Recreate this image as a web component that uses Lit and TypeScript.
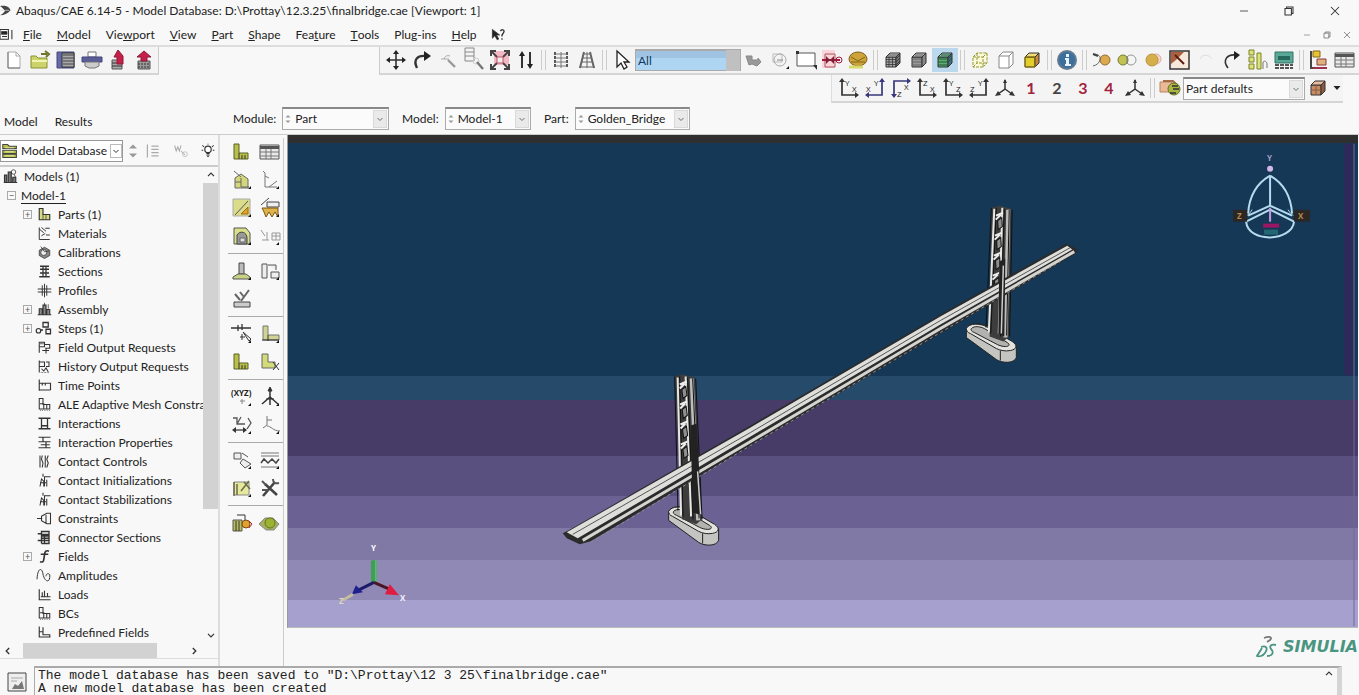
import { LitElement, html, svg, css, nothing, type SVGTemplateResult } from "lit";
import { customElement, property } from "lit/decorators.js";
import { classMap } from "lit/directives/class-map.js";

const cube = (front: string, top: string, side: string) => svg`
  <path d="M3 7h10v10H3z" fill=${front}/><path d="M3 7l4-4h10l-4 4z" fill=${top}/><path d="M13 7l4-4v10l-4 4z" fill=${side}/>`;
const meshLines = svg`<path d="M3 9.5h10M3 12h10M3 14.5h10M6 7v10M9.500 7v10M5 5h10M13 9l4-4M13 12l4-4M13 15l4-4" opacity=".8"/>`;
const bracket = svg`<path d="M2 2h5v9h9v6H2z" fill="#b9c04a" stroke="#5c6024"/><path d="M7 11v6M10 13v4M13 13v4"/>`;
const corner = svg`<path d="M19 16v3h-3z" fill="#111" stroke="none"/>`;

const ICONS: Record<string, SVGTemplateResult> = {
  app: svg`<path d="M0 3c9-2 14 2 15 6-4 5-9 7-15 7 4-2 6-4 7-6-2-3-4-5-7-7z" fill="#444" stroke="none"/><path d="M0 9h13" stroke="#ddd"/>`,
  doc: svg`<path d="M0 2h12v14H0z" stroke-width="1.500"/><path d="M2 5h8v4H2z" fill="#222"/><path d="M3 12h7M17 3v13" stroke-width="1.500"/>`,
  new: svg`<path d="M4 2h8l4 4v12H4z" fill="#fff" stroke="#aaa"/><path d="M4 2v16h12" stroke="#777"/><path d="M12 2v4h4" stroke="#aaa"/>`,
  open: svg`<path d="M1 6h5l2 2h9v10H1z" fill="#cbd36a" stroke="#8a9130"/><path d="M2 11h15" stroke="#f2f5b0" stroke-width="2"/><path d="M11 4h6M15 1l4 3-3 3" stroke="#6d7428" stroke-width="2"/>`,
  save: svg`<path d="M1 2h17v16H1z" fill="#6669a8" stroke="#44467a"/><path d="M6 3h12v14H6z" fill="#aaa"/><path d="M7 5h11M7 8h11M7 11h11M7 14h11" stroke="#444"/>`,
  print: svg`<path d="M6 2h8v5H6z" fill="#fff" stroke="#777"/><path d="M0 7h20v5H0z" fill="#5b5d99" stroke="#45477c"/><path d="M3 12h14v4l-4 2H7l-4-2z" fill="#ccc" stroke="#777"/>`,
  exportA: svg`<path d="M4 10h10v9H4z" fill="#aaa" stroke="#555"/><path d="M4 13h10M4 16h10"/><path d="M9 14V7H6l4-7 5 6v8z" fill="#c42048" stroke="#90183a"/>`,
  exportB: svg`<path d="M4 11h12v8H4z" fill="#999" stroke="#555"/><path d="M4 14h12M4 17h12" stroke-dasharray="2 1"/><path d="M7 11V7H3l7-6 7 6h-4v4z" fill="#c42048" stroke="#90183a"/>`,
  pan: svg`<path d="M10 2v16M2 10h16" stroke-width="1.600"/><path d="M10 0l3 4H7zM10 20l3-4H7zM0 10l4-3v6zM20 10l-4-3v6z" fill="#222" stroke="none"/>`,
  rotate: svg`<path d="M5 18C1 10 5 5 14 6" stroke-width="2.400"/><path d="M12 1l7 5-7 5z" fill="#222" stroke="none"/>`,
  mag: svg`<path d="M12 6c-3-1-5 0-6 3M3 9h8" stroke="#aaa"/><path d="M10 10l7 7" stroke="#999" stroke-width="2.400"/>`,
  magBox: svg`<path d="M1 -2h9v13H1zM1 2h9M1 6h9" stroke="#888"/><circle cx="12" cy="11" r="3" stroke="#ccc"/><path d="M13 12l6 7" stroke="#777" stroke-width="2.400"/>`,
  fit: svg`<path d="M4 1h15v14H4z" fill="#f4b8c4" stroke="none"/><path d="M1 1l6 6M19 1l-6 6M1 19l6-6M19 19l-6-6" stroke="#444" stroke-width="1.800"/><path d="M1 6V1h5M14 1h5v5M1 14v5h5M14 19h5v-5" stroke="#444" stroke-width="2"/><path d="M7 7h6v6H7z" fill="#eee" stroke="#b56"/>`,
  updown: svg`<path d="M6 18V4M14 2v14" stroke-width="2"/><path d="M6 1l3 5H3zM14 19l3-5h-6z" fill="#222" stroke="none"/>`,
  grid: svg`<path d="M4 2v16M16 2v16" stroke-width="2" stroke-dasharray="3 1" stroke="#555"/><path d="M4 4h12M4 8h12M4 12h12M4 16h12M10 2v16" stroke="#777"/>`,
  persp: svg`<path d="M7 2L3 18M13 2l4 16" stroke="#666" stroke-width="2"/><path d="M6 4h8M5 8h10M4 12h12M2 17h16M10 2v16" stroke="#666"/>`,
  pointer: svg`<path d="M5 1v16l4-4 3 6 3-2-3-5h5z" fill="#fff" stroke="#222" stroke-width="1.300"/>`,
  blob: svg`<path d="M2 6h6v4h6V8l3 4-4 4-5-2-3 1z" fill="#999" stroke="#888"/>`,
  blob2: svg`<path d="M3 4h9v8H3z" stroke="#bbb"/><circle cx="10" cy="10" r="6" stroke="#aaa"/><path d="M7 10h6" stroke="#888"/>${corner}`,
  rectSel: svg`<path d="M1 3h18v13H1z" fill="#fff" stroke="#555"/><path d="M0 1h3v3H0zM17 15h4v5z" fill="#333" stroke="none"/>`,
  redSel: svg`<path d="M0 0h13v18H0z" fill="#fbd5dc" stroke="none"/><path d="M3 4h10v13H3z" stroke="#a55"/><path d="M0 10h18" stroke="#a01c3c" stroke-width="2"/><path d="M4 6l4 4-4 4zM12 6v8l-4-4z" fill="#802038" stroke="none"/><circle cx="17" cy="10" r="3" stroke="#a01c3c"/>`,
  ball: svg`<ellipse cx="10" cy="9" rx="9" ry="7" fill="#d0a23a" stroke="#7c611e"/><path d="M3 7l7 4 7-4M3 12h14" stroke="#7a6a18"/><path d="M1 17h14" stroke="#d8db6c" stroke-width="3"/>`,
  cubeMesh: svg`${cube("#aaa", "#ccc", "#777")}${meshLines}`,
  cubeDark: svg`${cube("#999", "#bbb", "#888")}<path d="M4 9h8M4 12h8M4 15h8M6 5h8" stroke="#666"/>`,
  cubeGreen: svg`${cube("#59b06f", "#8fc7ae", "#446e86")}<path d="M3 9h10M3 12h10M3 15h10M6 5h9M13 9l4-4M13 12l4-4" stroke="#27503a"/>`,
  cubeWire: svg`<path d="M3 7h10v10H3zM3 7l4-4h10v10l-4 4M13 7l4-4M7 3v10h10M3 17l4-4" fill="#fbfbdc" stroke="#94992c" stroke-dasharray="3 1"/>`,
  cubeHollow: svg`<path d="M3 6h10v12H3zM3 6l4-4h10v12l-4 4M13 6l4-4" fill="#fff" stroke="#888"/>`,
  cubeGold: svg`${cube("#e2cf2c", "#efdc77", "#c7873c")}<path d="M3 7h10v10H3z" stroke="#9c7d15"/>`,
  info: svg`<circle cx="10" cy="10" r="9" fill="#3d6f9d" stroke="#637b91" stroke-width="2"/><path d="M9 4h3v3H9zM8 8h4v6h2v2H8v-2h1v-4H8z" fill="#e8f3fb" stroke="none"/>`,
  ovalA: svg`<circle cx="13" cy="10" r="5" fill="#dda94f" stroke="#936d34"/><path d="M1 4c6 0 8 3 7 6s-3 5-7 6" stroke="#666"/><path d="M1 4l5 2" stroke="#444" stroke-width="2"/>`,
  ovalB: svg`<circle cx="13" cy="10" r="5" fill="#f4f4f4" stroke="#999"/><circle cx="5" cy="10" r="5" fill="#c0c352" stroke="#7a7c35"/><path d="M9 6v8" stroke="#777"/>`,
  ovalC: svg`<circle cx="12" cy="9" r="5" fill="#f6d6c8" stroke="#daa"/><circle cx="8" cy="10" r="6" fill="#d5b04a" stroke="#b59440"/>`,
  replace: svg`<path d="M0 1h19v18H0z" fill="#f7e8dc" stroke="#333" stroke-width="1.500"/><path d="M1 2h13l-4 4-4 4-5 4z" fill="#a9603f" stroke="none"/><path d="M5 5l9 9" stroke="#5a1c12" stroke-width="2"/>`,
  faint: svg`<path d="M4 9c2-5 9-5 12 0" stroke="#ddd"/>`,
  redo: svg`<path d="M6 18C0 10 5 4 14 5" stroke-width="1.600"/><path d="M12 1l6 4-6 5z" fill="#222" stroke="none"/>`,
  greenTree: svg`<path d="M1 0h5v5H1zM1 7h5v5H1zM1 14h5v5H1zM9 3h4v16H9z" fill="#dbe27b" stroke="#7c8426"/><path d="M15 12c2-2 4 0 4 2v4M15 12v7" stroke="#777"/>`,
  tealTable: svg`<path d="M1 2h18v11H1z" fill="#5aa898" stroke="#347568"/><path d="M4 6h12v4H4z" fill="#27695c" stroke="none"/><path d="M1 15h18M1 18h18" stroke="#555" stroke-width="2" stroke-dasharray="4 1"/>`,
  tree: svg`<path d="M2 1v17h13" stroke="#444" stroke-width="2"/><path d="M4 1h7v6H4z" fill="#e8c431" stroke="#85641b"/><path d="M8 9h9v6H8z" fill="#e0b07c" stroke="#863a3a"/><path d="M4 18h14" stroke="#a0304b" stroke-width="2"/>`,
  table: svg`<path d="M0 3h19v14H0z" fill="#e9e9e9" stroke="#555"/><path d="M0 4h19v3H0z" fill="#555" stroke="none"/><path d="M0 10h19M0 14h19M6 7v10M11 7v10" stroke="#777"/>`,
  palette: svg`<path d="M0 4h12v10H0z" fill="#eab995" stroke="#b98560"/><path d="M3 3h10l4 4" stroke="#a26d46" stroke-width="2"/><circle cx="14" cy="11" r="6" fill="#a9b73f" stroke="#65702b"/><path d="M12 8h6M13 11h6M10 15h6" stroke="#333" stroke-width="1.600"/>`,
  cubeBrown: svg`${cube("#c58d67", "#e5bb9d", "#8f5b3e")}<path d="M8 7v10M3 12h10" stroke="#8c5a3b"/>`,
  triad: svg`<path d="M10 2v9l-7 5M10 11l7 5" stroke="#333" stroke-width="1.500"/><path d="M10 1l2 4H8zM0 18l3-5 3 4zM20 18l-3-5-3 4z" fill="#333" stroke="none"/>`,
  // Model tree and toolbox glyphs
  database: svg`<path d="M1 2h6l2 2h9v3H1zM1 9h17v4H1zM1 14h17v4H1z" fill="#b8c043" stroke="#444" stroke-width="1.300"/><path d="M4 6h11M4 11h11M4 16h11" stroke="#f0f3b2"/>`,
  tinyupdown: svg`<path d="M10 2l5 5H5zM10 18l5-5H5z" fill="#999" stroke="none"/>`,
  list: svg`<path d="M3 2v16M8 4h9M8 8h9M8 12h9M8 16h9" stroke="#aaa" stroke-width="1.500"/>`,
  filter: svg`<path d="M2 3l2 7 2-5 2 5 2-7M10 10l5 5" stroke="#aaa" stroke-width="1.300"/><circle cx="15" cy="14" r="3" stroke="#bbb"/>`,
  bulb: svg`<circle cx="10" cy="8" r="4" fill="#fff" stroke-width="1.500"/><path d="M8 13h4M8 15h4M9 17h2M10 1v1M3 3l2 2M17 3l-2 2M2 9h2M16 9h2" stroke-width="1.300"/>`,
  models: svg`<path d="M2 18V8h3v10M7 18V4h4v14M13 18v-7h4v7M1 18h18" fill="#777" stroke-width="1.500"/><circle cx="14" cy="4" r="3"/><path d="M15 7l2 5"/>`,
  part: svg`<path d="M3 2h5v8h9v7H3z" fill="#d7dc82" stroke-width="1.500"/><path d="M8 10v7M12 10v7"/>`,
  materials: svg`<path d="M3 2v16h14M3 4l6 5M6 2l6 5M11 3h6M12 12h5M6 13l5-3" stroke-width="1.300"/>`,
  calibration: svg`<path d="M3 7l7-4 7 4v7l-7 4-7-4z" fill="#888" stroke="#333"/><circle cx="9" cy="10" r="4" fill="#eee"/><path d="M5 2l5 7 6-1"/>`,
  section: svg`<path d="M4 3h12M4 7h12M4 12h12M3 17h14M8 2v15M12 2v15" stroke-width="1.700"/>`,
  profile: svg`<path d="M1 8h18M1 12h18M7 3v14M10 1v18M13 3v14" stroke-width="1.300"/>`,
  assembly: svg`<path d="M3 17V9h4v8M8 17V4h4v13M13 17v-7h4v7M1 17h18" fill="#888" stroke-width="1.500"/><path d="M10 1v4M15 3v6"/>`,
  steps: svg`<circle cx="2" cy="13" r="3" stroke-width="1.600"/><path d="M5 12h3M8 2h7v6H8zM12 11h6v6h-6z" stroke-width="1.700"/>`,
  field: svg`<path d="M3 3h7v6H3zM3 9v8M10 6h7v5h-6M7 14h9M12 11v7" stroke-width="1.400"/><path d="M4 5h5"/>`,
  history: svg`<path d="M3 2v16M3 4h7v6H3M12 4h4v6h-4M6 13l3 3 3-4 3 5" stroke-width="1.400"/><path d="M5 18h12" stroke-dasharray="1 1"/>`,
  time: svg`<path d="M3 2v15M3 7h15v9M3 16h15M7 7v3M11 7v3" stroke-width="1.500"/>`,
  predefined: svg`<path d="M3 2v14h15M3 9h5V3M8 9v4h9v3" stroke-width="1.500"/>`,
  lshape: svg`<path d="M3 2v14h14v-6H8V2zM4 9h5v7M13 10v6" stroke-width="1.400"/><path d="M4 18h13" stroke-dasharray="1 2"/>`,
  interaction: svg`<path d="M2 3h16M2 17h16M6 3v14M14 3v14M6 13h9" stroke-width="1.700"/>`,
  intProp: svg`<path d="M2 3h16M2 9h16M5 13h12M2 17h16M8 3v6M12 9v8" stroke-width="1.600"/>`,
  contact: svg`<path d="M4 2v16M7 2l-1 5 2 5-1 6M11 2v16M15 2l-2 5 2 5-2 6" stroke-width="1.400"/>`,
  contactInit: svg`<path d="M4 18l2-10 3 3v7M10 18V5h8M13 9v9M4 13h8M8 1v4" stroke-width="1.400"/>`,
  constraint: svg`<path d="M0 10h7M6 7l7-4h5v14h-5l-7-4zM12 3v14" stroke-width="1.400"/>`,
  connector: svg`<path d="M6 2h10v4H6zM6 8h10M6 11h10M6 14h10M6 18h10V5M6 5v13M1 5h5M1 14h5M10 6v12" stroke-width="1.800"/>`,
  func: svg`<path d="M16 3c-4-2-6 1-6 5l-1 6c0 3-2 4-5 3M5 7h10" stroke-width="2.200"/>`,
  wave: svg`<path d="M0 15C1-2 7 0 8 8c2 11 10 13 9 1-2-3-5-1-5 2" stroke-width="1.300"/>`,
  load: svg`<path d="M3 3v14h15M7 7v6M10 5v8M14 8v5M5 13h13" stroke-width="1.500"/>`,
  tbPart: svg`${bracket}`,
  tbShell: svg`<path d="M3 18V8l6-4 7 5v9z" fill="#d3d77a" stroke="#666"/><path d="M2 1l7 6M9 8v9h8M3 12h6" stroke="#666"/>${corner}`,
  tbWire: svg`<path d="M5 3v14h12M5 3l-2-2M5 6l4 2M9 17l8-6" stroke="#777"/>${corner}`,
  tbCut: svg`<path d="M1 1h17v17H1z" fill="#dbdc8a" stroke="#aaa"/><path d="M3 17L16 3" stroke="#555"/><path d="M9 16l7-7v7z" fill="#e3a32c" stroke="#9b6a14"/>${corner}`,
  tbCutB: svg`<path d="M1 7L9 0M7 4h12v5H7z" stroke="#444" fill="#eee"/><path d="M2 10h16v9l-3-5-3 5-3-5-3 5-2-5z" fill="#deb34a" stroke="#7a5616"/>${corner}`,
  tbRound: svg`<path d="M2 2h12l4 5v11H2z" fill="#dadf88" stroke="#555"/><path d="M5 18V9c3-5 10-3 10 3v6z" fill="#999" stroke="#444"/><path d="M8 12h5v4H8z" fill="#ddd" stroke="#666"/>${corner}`,
  tbMirror: svg`<path d="M1 4l4 6M2 14h7M7 6v8" stroke="#999"/><path d="M12 7h8v7h-8zM16 7v7M12 10h8" stroke="#999"/>${corner}`,
  tbEdit: svg`<path d="M7 2h5v11H7z" fill="#bbb" stroke="#444"/><path d="M1 16l5-3h8l4 3v2H1z" fill="#c9d184" stroke="#555"/>${corner}`,
  tbEditB: svg`<path d="M2 3h5v14H2zM11 11h8v6h-8zM8 4h8v5" fill="#eee" stroke="#555"/>${corner}`,
  tbEditC: svg`<path d="M2 13h16v5H2z" fill="#ccc" stroke="#444"/><path d="M3 5l5 6M17 1L9 12M8 3l4 5" stroke="#666" stroke-width="2"/>`,
  tbDatum: svg`<path d="M-1 4h20M6 1v6M10 0v6" stroke-width="1.300"/><path d="M11 8l6 9 2-2zM8 13h5M10 10v6" fill="#fff"/>${corner}`,
  tbPartition: svg`<path d="M3 2h5v9h11v5H3z" fill="#cfd492" stroke="#777"/><path d="M8 11v6M2 16h17"/>${corner}`,
  tbPartCut: svg`<path d="M2 2h6v8h7v6H2z" fill="#d3da78" stroke="#666"/><path d="M13 10l6 8M19 11l-6 7" stroke="#333"/>`,
  tbXyz: svg`<text x="-1" y="9" class="glyph bold">(XYZ)</text><path d="M8 14h5M10 12v5" stroke="#888"/>${corner}`,
  tbAxis: svg`<path d="M10 1v17M2 17l8-7 8 7" stroke-width="1.500"/><path d="M10 0l2 4H8zM6 12h8" fill="#333"/>${corner}`,
  tbArrows: svg`<path d="M1 3h4v6h8M9 2l-4 7M2 15h12M16 3l3 5-4 6" stroke="#555" stroke-width="1.300"/><path d="M0 15l4-3v6zM15 15l-4-3v6z" fill="#333" stroke="none"/>${corner}`,
  tbCurve: svg`<path d="M7 1v9l-4 3M7 5h5M7 11c4 0 6 5 13 5" stroke="#777"/>${corner}`,
  tbPlane: svg`<path d="M2 3h7v6H2zM10 3l6 4M11 9l8 5-6 4-5-5z" fill="#eee" stroke="#555"/>${corner}`,
  tbWaves: svg`<path d="M1 3h18M1 6h18M1 17h18" stroke="#777"/><path d="M1 13l3-4 4 4 4-4 4 4 3-4" stroke="#444" stroke-width="1.500"/>${corner}`,
  tbNote: svg`<path d="M2 4h15v13H2z" fill="#e6e99c" stroke="#888"/><path d="M2 4v14M5 6v11M9 13l8-10M12 4l6 7" stroke="#6a6a4a" stroke-width="1.500"/>${corner}`,
  tbTools: svg`<path d="M3 18L15 4M5 6l12 11" stroke="#444" stroke-width="2.600"/><path d="M2 3l4 4M13 1c0 4 2 5 6 4M2 12h6" stroke="#555" stroke-width="2"/>`,
  tbAssemble: svg`<path d="M1 7h9v11H1z" fill="#b9bd5b" stroke="#555"/><path d="M4 8v10M7 8v10M5 2h8v5"/><circle cx="14" cy="11" r="4" fill="#dfa32c" stroke="#7f4a13"/><path d="M17 8l3 3-3 4" stroke="#b3203a"/>`,
  tbGreen: svg`<path d="M-1 11l6-6h8l6 6-5 6H6z" fill="#a5b060" stroke="#888"/><circle cx="10" cy="10" r="5" fill="#9ab432" stroke="#6b7423"/>`,
  helpPtr: svg`<path d="M3 3v11l3-3 3 5 2-1-3-5h4z" fill="#222"/><path d="M13 5c2-3 6-1 4 2l-2 3v2M15 14v2" stroke-width="1.700"/>`,
  message: svg`<path d="M1 1h18v18H1z" fill="#eee" stroke="#444"/><path d="M4 6h12M4 9h6" stroke="#aaa"/><path d="M5 17l3-5 3 2 4-5 2 8z" fill="#777" stroke="none"/>`,
  min: svg`<path d="M5 10h10"/>`,
  restore: svg`<path d="M5 7h8v8H5zM7 7V5h8v8h-2" stroke-width="1.300"/>`,
  close: svg`<path d="M5 5l10 10M15 5L5 15" stroke-width="1.300"/>`,
  up: svg`<path d="M5 12l5-5 5 5" stroke-width="2"/>`,
  down: svg`<path d="M5 8l5 5 5-5" stroke-width="2"/>`,
  left: svg`<path d="M12 5l-5 5 5 5" stroke-width="2.200"/>`,
  right: svg`<path d="M8 5l5 5-5 5" stroke-width="2.200"/>`,
  caret: svg`<path d="M3 6h14l-7 8z" fill="#222" stroke="none"/>`,
};

/** Plane view button: an L of two arrows with the names of its axes. */
const axes = (v: string, h: string, flip = false, down = false, ink = "#333") => svg`
  <g transform=${flip ? "translate(20 0) scale(-1 1)" : down ? "translate(0 20) scale(1 -1)" : ""}>
    <path d="M3 2v15h15" stroke=${ink} stroke-width="1.700"/><path d="M3 0l3 4H0zM20 17l-4-3v6z" fill=${ink} stroke="none"/></g>
  <text x=${flip ? 9 : 6} y=${down ? 19 : 8} class="glyph">${v}</text><text x=${flip ? 1 : 13} y=${down ? 12 : 14} class="glyph">${h}</text>`;
ICONS.axYX = axes("Y", "X");
ICONS.axYX2 = axes("Y", "X", true, false, "#37377c");
ICONS.axXZ = axes("Z", "X", false, true, "#37377c");
ICONS.axZX = axes("Z", "X");
ICONS.axYZ = axes("Y", "Z");
ICONS.axYZ2 = axes("Y", "Z", true);

@customElement("cae-icon")
class CaeIcon extends LitElement {
  @property() name = "";
  static styles = css`
    :host { display: inline-flex; width: 20px; height: 20px; flex: none; }
    svg { width: 100%; height: 100%; fill: none; stroke: #333; overflow: visible; }
    .glyph { font: 8px "Open Sans", sans-serif; fill: #222; stroke: none; }
    .bold { font-weight: 700; }
  `;
  render() {
    return html`<svg viewBox="0 0 20 20" aria-hidden="true">${ICONS[this.name] ?? nothing}</svg>`;
  }
}

@customElement("cae-select")
class CaeSelect extends LitElement {
  @property() label = "";
  @property() value = "";
  @property({ type: Boolean }) spin = false;
  @property({ type: Boolean }) hideLabel = false;
  @property({ type: Boolean, reflect: true }) filled = false;
  static styles = css`
    :host { display: flex; align-items: center; gap: 6px; justify-content: space-between; }
    .box { box-sizing: border-box; display: flex; align-items: center; flex: 1; height: 23px; border: 1px solid #aaa; border-top: 2px solid #888; background: #fbfbfb; }
    select { appearance: none; flex: 1; min-width: 0; height: 100%; border: 0; margin: 0; padding: 0 2px; background: none; font: inherit; color: #222; }
    .spin { width: 10px; height: 14px; }
    .arrow { width: 10px; height: 14px; padding: 1px; border: 1px solid #ccc; background: #e4e4e4; margin-right: 1px; opacity: .7; }
    label { white-space: nowrap; }
    :host([filled]) .box { height: 22px; border-color: #aaa; background: linear-gradient(#9fc3e0 35%, #aed6f3 35%); }
    :host([filled]) .arrow { background: #c0c0c0; border-color: #c0c0c0; margin: 0; height: 17px; opacity: 1; }
    :host([filled]) select { color: #12385f; }
  `;
  render() {
    return html`
      ${this.hideLabel ? nothing : html`<label for="s">${this.label}</label>`}
      <div class="box">
        ${this.spin ? html`<cae-icon class="spin" name="tinyupdown"></cae-icon>` : nothing}
        <select id="s" aria-label=${this.label}><option>${this.value}</option></select>
        ${this.filled ? html`<span class="arrow"></span>` : html`<cae-icon class="arrow" name="down"></cae-icon>`}
      </div>`;
  }
}

@customElement("cae-viewport")
class CaeViewport extends LitElement {
  static styles = css`
    :host { display: block; position: relative; overflow: hidden;
      background: linear-gradient(#2f2f2f 0 1.6%, #163857 0 48.9%, #264a69 0 53.8%, #473b67 0 65.2%, #5a5080 0 73.3%, #6b6193 0 79.8%, #8078a5 0 86.3%, #9089b5 0 94.5%, #a6a0cf 0); }
    svg { position: absolute; inset: 0; width: 100%; height: 100%; }
    text { font: bold 8px "Open Sans", sans-serif; }
  `;
  private tower(x: number, y: number, len: number, skew: number) {
    const cells = [8, 28, 48, 68];
    return svg`<g transform="translate(${x} ${y}) skewX(${skew})">
      <path d="M-2 0l8-2 12 3 5 ${len}-6 5-14-5z" fill="#3d3d3d"/>
      <path d="M1 1l1 ${len - 4}M9 0l3 ${len - 2}" stroke="#e6e6e3" stroke-width="2"/>
      <path d="M15 2l4 ${len}" stroke="#bdbdbd" stroke-width="4"/>
      <path d="M3 0l1 ${len - 2}M11 1l3 ${len}M19 2l4 ${len - 1}M-2 0l1 ${len - 8}M16 2l4 ${len - 2}" stroke="#111"/>
      ${cells.map(c => svg`<path d="M3 ${c}l7-3M3 ${c + 4}l5-5" stroke="#eee" stroke-width="2"/><path d="M5 ${c + 5}l4-3 1 9-4 3z" fill="#8f8f8f" stroke="#111"/>`)}
    </g>`;
  }
  private footing(x: number, y: number) {
    return svg`<g transform="translate(${x} ${y})" stroke="#222">
      <path d="M0 4v9l30 22c6 4 18 4 20-2v-12L24 3C16-2 3-2 0 4z" fill="#c4c4c0"/>
      <path d="M0 4c3-6 14-5 20-2l26 15c6 4 4 8-2 9-5 1-10 0-14-2L4 9C1 8 0 6 0 4z" fill="#e2e2de"/>
      <path d="M5 4c3-3 9-2 13 0l23 14c3 2 2 4-2 4-3 0-6-1-8-2L8 8C5 7 4 5 5 4z" fill="#b2b2ae"/>
      <path d="M34 26v10" />
    </g>`;
  }
  render() {
    return html`<svg viewBox="287 136 1071 491" role="img" aria-label="Golden_Bridge part" fill="none">
      <path d="M1344 144h9v232h-9z" fill="#2c2a58"/><path d="M1354 144v483" stroke="#6f6a94"/>
      ${this.footing(668, 508)}
      ${this.footing(966, 325)}
      ${this.tower(676, 377, 142, 1)}
      ${this.tower(993, 208, 128, -3)}
      <path d="M562 534l6-3 182-105 190-111 126-71 12 6-4 5-134 79-190 112-160 96-11 3-13-6z" fill="#2b2b2b"/>
      <path d="M566 533L750 428 940 317 1067 246 1072 250 940 325 750 437 577 539z" fill="#dededb"/>
      <path d="M572 535L750 433 940 321 1070 248" stroke="#555"/>
      <path d="M582 541L750 442 940 329 1074 252" stroke="#d4d4d0" stroke-width="3"/>
      <path d="M590 543L750 446 940 333 1060 262" stroke="#8f8f8f" stroke-dasharray="3 3"/>
      <path d="M690 426l6-2 5 92-9-3zM999 262l6-3-1 78-6-3z" fill="#222"/>
      <path d="M697 472l3 43M1003 266l-2 68" stroke="#ccc" stroke-width="1.500"/>
      <g stroke="#b4dcee" stroke-width="2">
        <path d="M1270 176v30l-22 10M1270 206l22 10M1270 176c-14 8-21 22-22 38M1270 176c14 8 21 22 22 38M1246 222l24-12 24 12c-2 20-46 22-48 0z"/>
        <path d="M1247 216c2-2 4-4 5-6M1293 216c-2-2-4-4-5-6" stroke-width="1"/>
      </g>
      <circle cx="1270" cy="169" r="3" fill="#d3b9e6"/>
      <path d="M1263 224h16v4h-16z" fill="#9c1663"/><path d="M1264 230h14v5h-14z" fill="#2a7c80" opacity=".7"/><path d="M1270 208v14" stroke="#c69be0" stroke-width="2"/>
      <path d="M1233 210h14v12h-14zM1294 210h16v12h-16z" fill="#2a2725"/>
      <text x="1267" y="161" fill="#a99cc8">Y</text><text x="1237" y="219" fill="#b98a4c">Z</text><text x="1298" y="219" fill="#b98a4c">X</text>
      <path d="M373 583v-22" stroke="#3f9f55" stroke-width="6"/><path d="M375 583v-22" stroke="#71cf86"/>
      <path d="M373 583l-18 9" stroke="#1b1b6a" stroke-width="3"/><path d="M351 595l4-9 7 7z" fill="#20208c"/>
      <path d="M373 583l16 7" stroke="#4b1524" stroke-width="3"/><path d="M398 596l-14-1 5-10z" fill="#e01c40"/>
      <path d="M342 601l10-6" stroke="#c3bda0" stroke-width="3"/>
      <text x="370" y="552" fill="#fff">Y</text><text x="338" y="605" fill="#ddd8b8">Z</text><text x="399" y="602" fill="#f3f0ff">X</text>
    </svg>`;
  }
}

type Node = { label: string; icon: string; open?: boolean };
const TREE: Node[] = [
  { label: "Parts (1)", icon: "part", open: false },
  { label: "Materials", icon: "materials" },
  { label: "Calibrations", icon: "calibration" },
  { label: "Sections", icon: "section" },
  { label: "Profiles", icon: "profile" },
  { label: "Assembly", icon: "assembly", open: false },
  { label: "Steps (1)", icon: "steps", open: false },
  { label: "Field Output Requests", icon: "field" },
  { label: "History Output Requests", icon: "history" },
  { label: "Time Points", icon: "time" },
  { label: "ALE Adaptive Mesh Constra", icon: "lshape" },
  { label: "Interactions", icon: "interaction" },
  { label: "Interaction Properties", icon: "intProp" },
  { label: "Contact Controls", icon: "contact" },
  { label: "Contact Initializations", icon: "contactInit" },
  { label: "Contact Stabilizations", icon: "contactInit" },
  { label: "Constraints", icon: "constraint" },
  { label: "Connector Sections", icon: "connector" },
  { label: "Fields", icon: "func", open: false },
  { label: "Amplitudes", icon: "wave" },
  { label: "Loads", icon: "load" },
  { label: "BCs", icon: "lshape" },
  { label: "Predefined Fields", icon: "predefined" },
];

const MENUS: [string, string, string][] = [
  ["", "F", "ile"], ["", "M", "odel"], ["Vie", "w", "port"], ["", "V", "iew"], ["", "P", "art"],
  ["", "S", "hape"], ["Fea", "t", "ure"], ["", "T", "ools"], ["Plu", "g", "-ins"], ["", "H", "elp"],
];

const TOOLBOX = [
  ["tbPart", "table", "tbShell", "tbWire", "tbCut", "tbCutB", "tbRound", "tbMirror"],
  ["tbEdit", "tbEditB", "tbEditC"],
  ["tbDatum", "tbPartition", "tbPart", "tbPartCut"],
  ["tbXyz", "tbAxis", "tbArrows", "tbCurve"],
  ["tbPlane", "tbWaves", "tbNote", "tbTools"],
  ["tbAssemble", "tbGreen"],
];

@customElement("app-root")
class AppRoot extends LitElement {
  static styles = css`
    :host { display: flex; flex-direction: column; height: 100vh; overflow: hidden; background: #f8f8f8; color: #222; font: 12px/16px Lato, "Open Sans", sans-serif; }
    * { box-sizing: border-box; }
    button { border: 0; padding: 0; margin: 0; background: none; font: inherit; color: inherit; display: inline-flex; align-items: center; justify-content: center; flex: none; }
    ul { list-style: none; margin: 0; padding: 0; }
    .title { display: flex; align-items: center; height: 22px; flex: none; white-space: nowrap; }
    .title h1 { font: inherit; margin: 0; flex: 1; }
    .title cae-icon { width: 14px; height: 16px; margin-right: 2px; }
    .title button { width: 45px; }
    .title button cae-icon { width: 16px; margin: 0; }
    .title .end { width: 48px; }
    .menu { display: flex; align-items: center; gap: 15px; height: 25px; flex: none; border-bottom: 2px solid #ddd; padding-top: 2px; }
    .menu .doc { width: 14px; height: 14px; margin-right: -6px; }
    .menu .help { width: 16px; height: 16px; margin-left: -2px; }
    .menu .mdi { margin-left: auto; display: flex; gap: 8px; padding-right: 6px; }
    .mdi cae-icon { width: 12px; height: 12px; opacity: .7; }
    .bar { display: flex; height: 28px; flex: none; }
    .group { display: flex; align-items: center; background: #f4f4f4; border-bottom: 2px solid #d5d5d5; }
    .group button { width: 26px; height: 24px; }
    .group .on { background: #bcd8ec; }
    .file { width: 159px; padding-left: 1px; border-right: 1px solid #ccc; }
    .main { margin-left: auto; padding: 0 1px 0 3px; border-left: 1px solid #ccc; }
    .sep { display: flex; justify-content: center; width: 9px; height: 20px; flex: none; }
    .sep::before { content: ""; width: 3px; border: 1px solid #ccc; border-width: 0 1px; }
    .all { width: 106px; }
    .num { font-weight: 700; font-size: 16px; color: #a02440; }
    .num.dark { color: #444; }
    .views { margin-left: auto; margin-right: 16px; padding-left: 4px; border-left: 1px solid #ddd; }
    .defaults { width: 122px; }
    .group .tiny { width: 12px; }
    .tiny cae-icon { width: 10px; height: 10px; }
    .context { display: flex; align-items: center; height: 32px; flex: none; border-bottom: 1px solid #ccc; }
    .tabs { display: flex; gap: 17px; width: 233px; padding: 7px 0 0 4px; flex: none; }
    .ctx-selects { display: flex; gap: 13px; }
    .module { width: 156px; } .model { width: 129px; } .part { width: 146px; }
    .work { display: flex; flex: 1; min-height: 0; }
    .side { display: flex; flex-direction: column; width: 220px; flex: none; padding: 5px 0 7px; border-right: 2px solid #ddd; }
    .side-tools { display: flex; align-items: center; height: 22px; flex: none; }
    .side-tools > button { width: 20px; } .side-tools > button cae-icon { width: 16px; height: 16px; }
    .side-tools .gap { margin-left: 8px; } .side-tools .last { margin-left: 7px; }
    .db { display: flex; align-items: center; width: 123px; height: 22px; border: 1px solid #999; background: #fff; }
    .db > cae-icon { width: 18px; height: 16px; }
    .db select { appearance: none; flex: 1; min-width: 0; border: 0; padding: 0 0 0 2px; background: none; font: inherit; color: inherit; }
    .db .drop { width: 12px; height: 14px; border: 1px solid #bbb; }
    .tree-wrap { display: flex; flex: 1; min-height: 0; margin-top: 3px; border-top: 2px solid #ccc; }
    .tree { flex: 1; min-width: 0; overflow: hidden; white-space: nowrap; }
    .row { display: flex; align-items: center; height: 19px; }
    .row cae-icon { width: 15px; height: 15px; margin-right: 6px; }
    .row.top { padding-left: 3px; }
    .row.model-row { padding-left: 7px; }
    .model-row .name { border-bottom: 1px solid #222; line-height: 15px; margin-left: 5px; }
    .row.child { padding-left: 23px; }
    .row.child::before { content: ""; width: 14px; flex: none; }
    .row.child.branch::before { content: none; }
    .exp { width: 9px; height: 9px; border: 1px solid #aaa; font-size: 9px; line-height: 7px; color: #555; }
    .branch .exp { margin-right: 5px; }
    .vscroll { width: 15px; display: flex; flex-direction: column; align-items: center; justify-content: space-between; flex: none; }
    .vscroll .thumb { flex: 1; width: 100%; background: #d2d2d2; margin-bottom: 118px; }
    .vscroll cae-icon, .hscroll cae-icon { width: 12px; height: 16px; }
    .hscroll { display: flex; align-items: center; height: 16px; flex: none; padding: 0 18px 0 2px; border-bottom: 1px solid #ddd; }
    .hscroll .thumb { width: 134px; height: 15px; background: #d2d2d2; margin: 0 auto 0 9px; }
    .toolbox { width: 56px; margin: 3px 3px 0 8px; flex: none; border-right: 1px solid #ccc; }
    .tools { display: grid; grid-template-columns: 28px 28px; grid-auto-rows: 28px; padding-bottom: 3px; margin-bottom: 3px; border-bottom: 1px solid #aaa; }
    .tools:last-child { border: 0; }
    .tools button { width: 28px; height: 28px; }
    .stage { display: flex; flex-direction: column; flex: 1; min-width: 0; padding-right: 1px; }
    .stage cae-viewport { flex: 1; border-bottom: 1px solid #bbb; border-left: 1px solid #999; }
    .brand { display: flex; align-items: center; justify-content: flex-end; gap: 4px; height: 38px; flex: none; color: #4a9582; font: italic bold 16px/16px "DejaVu Sans", sans-serif; }
    .brand svg { width: 24px; height: 24px; }
    .log { display: flex; height: 29px; flex: none; }
    .log > button { width: 34px; align-items: flex-start; padding: 6px 0 0 0; }
    .log > button cae-icon { width: 20px; height: 20px; }
    .log output { flex: 1; border: 1px solid #aaa; border-width: 2px 0 0 1px; padding: 1px 0 0 3px; font: 13px/13px "Liberation Mono", monospace; white-space: pre; overflow: hidden; }
    .log .rail { width: 22px; border-top: 2px solid #aaa; border-right: 5px solid #d5d5d5; margin-right: 17px; text-align: center; }
    .rail cae-icon { width: 12px; height: 12px; }
  `;

  private buttons(...names: string[]) {
    return names.map(n => html`<button aria-label=${n} class=${classMap({ on: n === "cubeGreen" })}><cae-icon name=${n}></cae-icon></button>`);
  }

  private sep = html`<span class="sep"></span>`;

  private row(n: Node) {
    const branch = n.open !== undefined;
    return html`<li class=${classMap({ row: true, child: true, branch })}>
      ${branch ? html`<button class="exp" aria-label="Expand ${n.label}">+</button>` : nothing}
      <cae-icon name=${n.icon}></cae-icon><span>${n.label}</span></li>`;
  }

  render() {
    return html`
      <header class="title">
        <cae-icon name="app"></cae-icon>
        <h1>Abaqus/CAE 6.14-5 - Model Database: D:\\Prottay\\12.3.25\\finalbridge.cae [Viewport: 1]</h1>
        <button aria-label="Minimize"><cae-icon name="min"></cae-icon></button>
        <button aria-label="Restore"><cae-icon name="restore"></cae-icon></button>
        <button class="end" aria-label="Close"><cae-icon name="close"></cae-icon></button>
      </header>
      <nav class="menu">
        <cae-icon class="doc" name="doc"></cae-icon>
        ${MENUS.map(([a, u, b]) => html`<button>${a}<u>${u}</u>${b}</button>`)}
        <button aria-label="Context help"><cae-icon class="help" name="helpPtr"></cae-icon></button>
        <span class="mdi">${["min", "restore", "close"].map(n => html`<button aria-label=${n}><cae-icon name=${n}></cae-icon></button>`)}</span>
      </nav>
      <div class="bar">
        <div class="group file">${this.buttons("new", "open", "save", "print", "exportA", "exportB")}</div>
        <div class="group main">
          ${this.buttons("pan", "rotate", "mag", "magBox", "fit", "updown")}${this.sep}
          ${this.buttons("grid", "persp")}${this.sep}
          ${this.buttons("pointer")}
          <cae-select class="all" filled hideLabel label="Selection filter" value="All"></cae-select>
          ${this.buttons("blob", "blob2", "rectSel", "redSel", "ball")}${this.sep}
          ${this.buttons("cubeMesh", "cubeDark", "cubeGreen")}${this.sep}
          ${this.buttons("cubeWire", "cubeHollow", "cubeGold")}${this.sep}
          ${this.buttons("info")}${this.sep}
          ${this.buttons("ovalA", "ovalB", "ovalC", "replace", "faint", "redo", "greenTree", "tealTable")}${this.sep}
          ${this.buttons("tree", "table")}
        </div>
      </div>
      <div class="bar">
        <div class="group views">
          ${this.buttons("axYX", "axYX2", "axXZ", "axZX", "axYZ", "axYZ2", "triad")}
          ${[1, 2, 3, 4].map(n => html`<button class=${classMap({ num: true, dark: n === 2 })}>${n}</button>`)}
          ${this.buttons("triad")}${this.sep}
          ${this.buttons("palette")}
          <cae-select class="defaults" hideLabel label="Color code" value="Part defaults"></cae-select>
          ${this.buttons("cubeBrown")}
          <button class="tiny" aria-label="More"><cae-icon name="caret"></cae-icon></button>
        </div>
      </div>
      <div class="context">
        <div class="tabs" role="tablist"><button role="tab" aria-selected="true">Model</button><button role="tab">Results</button></div>
        <div class="ctx-selects">
          <cae-select class="module" spin label="Module:" value="Part"></cae-select>
          <cae-select class="model" spin label="Model:" value="Model-1"></cae-select>
          <cae-select class="part" spin label="Part:" value="Golden_Bridge"></cae-select>
        </div>
      </div>
      <main class="work">
        <aside class="side">
          <div class="side-tools">
            <div class="db"><cae-icon name="database"></cae-icon>
              <select aria-label="Database"><option>Model Database</option></select>
              <cae-icon class="drop" name="down"></cae-icon></div>
            <button aria-label="Order"><cae-icon name="tinyupdown"></cae-icon></button>
            <button aria-label="List"><cae-icon name="list"></cae-icon></button>
            <button class="gap" aria-label="Filter"><cae-icon name="filter"></cae-icon></button>
            <button class="last" aria-label="Tips"><cae-icon name="bulb"></cae-icon></button>
          </div>
          <div class="tree-wrap">
            <ul class="tree">
              <li class="row top"><cae-icon name="models"></cae-icon><span>Models (1)</span></li>
              <li class="row model-row"><button class="exp" aria-label="Collapse Model-1">−</button><span class="name">Model-1</span></li>
              ${TREE.map(n => this.row(n))}
            </ul>
            <div class="vscroll"><cae-icon name="up"></cae-icon><span class="thumb"></span><cae-icon name="down"></cae-icon></div>
          </div>
          <div class="hscroll"><cae-icon name="left"></cae-icon><span class="thumb"></span><cae-icon name="right"></cae-icon></div>
        </aside>
        <div class="toolbox">
          ${TOOLBOX.map(g => html`<div class="tools">${this.buttons(...g)}</div>`)}
        </div>
        <section class="stage">
          <cae-viewport></cae-viewport>
          <div class="brand">
            <svg viewBox="0 0 24 24" fill="none" stroke="#4a9582" stroke-width="1.800" aria-hidden="true">
              <path d="M9 3c5-2 9-1 6 2l-3 2" stroke="#777"/><path d="M6 12c6-2 7 2 4 6-2 3-6 4-8 3l5-8M21 10c-5-1-7 1-5 4 3 3 2 7-4 7"/></svg>
            <span>SIMULIA</span>
          </div>
        </section>
      </main>
      <footer class="log">
        <button aria-label="Message area"><cae-icon name="message"></cae-icon></button>
        <output>The model database has been saved to "D:\\Prottay\\12 3 25\\finalbridge.cae"
A new model database has been created</output>
        <span class="rail"><cae-icon name="up"></cae-icon></span>
      </footer>`;
  }
}
